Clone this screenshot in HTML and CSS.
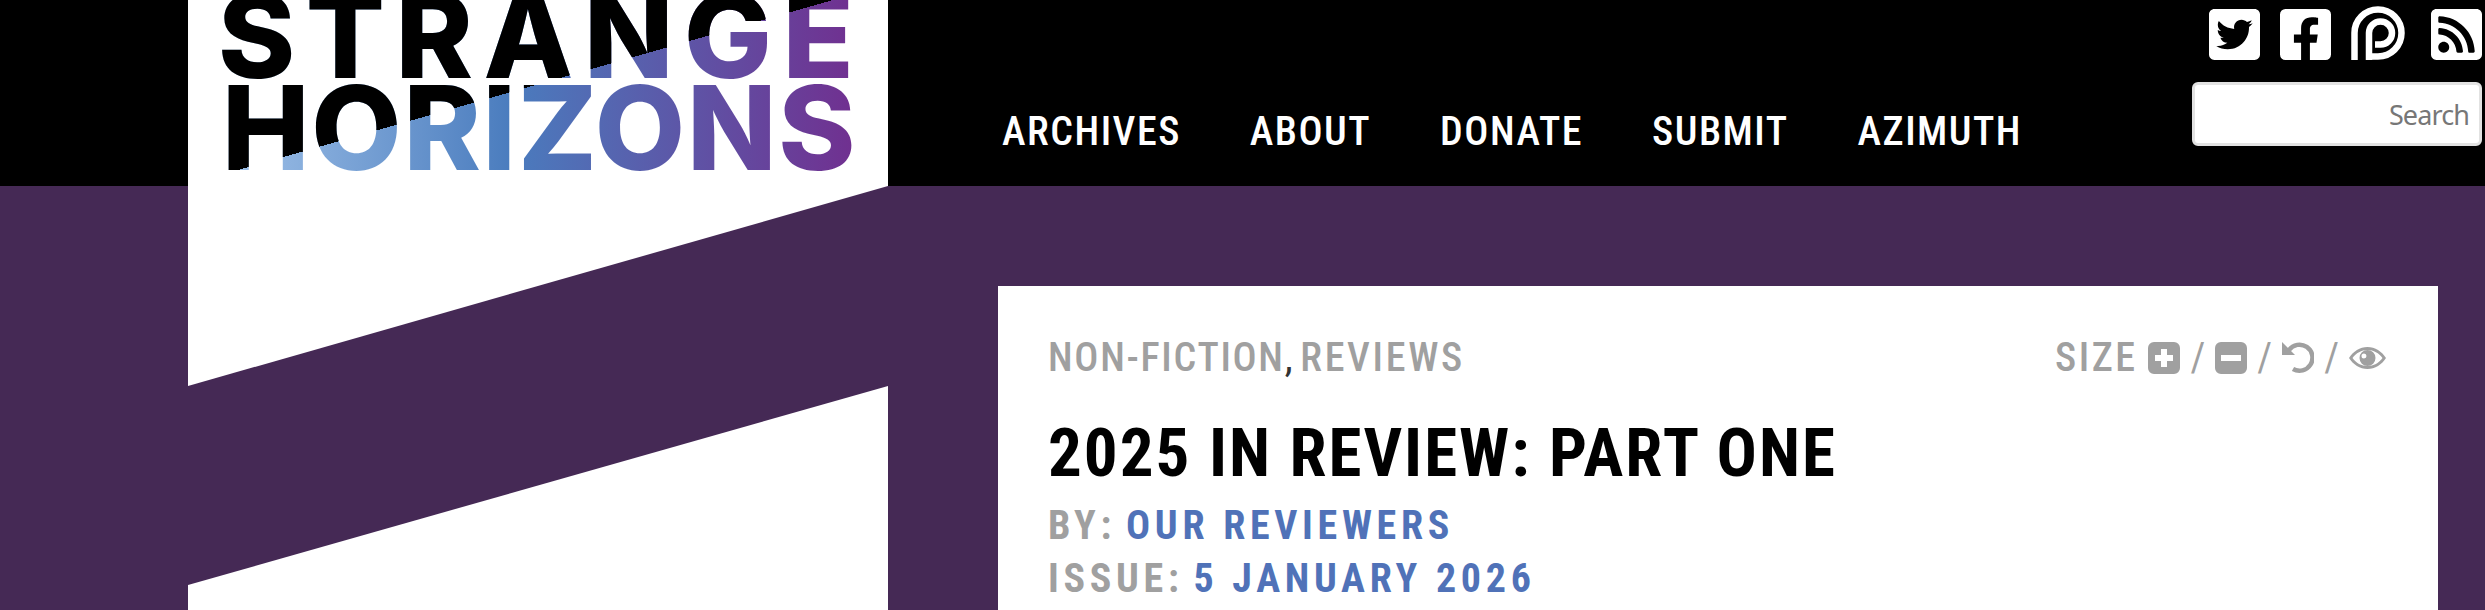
FILE: index.html
```html
<!DOCTYPE html>
<html lang="en">
<head>
<meta charset="utf-8">
<title>2025 in Review: Part One</title>
<link rel="stylesheet" href="styles.css">
</head>
<body>
<header class="site-header">
  <a class="brand" href="#">
    <span class="wordmark"><span class="line-one">STRANGE</span><span class="line-two">HORIZONS</span></span>
  </a>
  <nav class="main-nav">
    <a href="#">ARCHIVES</a>
    <a href="#">ABOUT</a>
    <a href="#">DONATE</a>
    <a href="#">SUBMIT</a>
    <a href="#">AZIMUTH</a>
  </nav>
  <div class="tools">
    <div class="social">
      <svg class="social-square" viewBox="0 32 448 448"><path d="M400 32H48C21.5 32 0 53.5 0 80v352c0 26.5 21.5 48 48 48h352c26.5 0 48-21.5 48-48V80c0-26.5-21.5-48-48-48zm-48.9 158.8c.2 2.8.2 5.7.2 8.5 0 86.7-66 186.6-186.6 186.6-37.2 0-71.7-10.8-100.7-29.4 5.3.6 10.4.8 15.8.8 30.7 0 58.9-10.4 81.4-28-28.8-.6-53-19.5-61.3-45.5 10.1 1.5 19.2 1.5 29.6-1.2-30-6.1-52.5-32.5-52.5-64.4v-.8c8.7 4.9 18.9 7.9 29.6 8.3a65.447 65.447 0 0 1-29.2-54.6c0-12.2 3.2-23.4 8.9-33.1 32.3 39.8 80.8 65.8 135.2 68.6-9.3-44.5 24-80.6 64-80.6 18.9 0 35.9 7.9 47.9 20.7 14.8-2.8 29-8.3 41.6-15.8-4.9 15.2-15.2 28-28.8 36.1 13.2-1.4 26-5.1 37.8-10.2-8.9 13.1-20.1 24.7-32.9 34z"/></svg>
      <svg class="social-square" viewBox="0 32 448 448"><path d="M400 32H48A48 48 0 0 0 0 80v352a48 48 0 0 0 48 48h137.25V327.69h-63V256h63v-54.64c0-62.15 37-96.48 93.67-96.48 27.14 0 55.52 4.84 55.52 4.84v61h-31.27c-30.81 0-40.42 19.12-40.42 38.73V256h68.78l-11 71.69h-57.78V480H400a48 48 0 0 0 48-48V80a48 48 0 0 0-48-48z"/></svg>
      <svg class="social-patreon" viewBox="0 0 54 54"><path d="M3.5 54V27A23.5 23.5 0 1 1 27 50.5H18M18 54V27A11.5 11.5 0 1 1 29.5 38.5H24"/></svg>
      <svg class="social-square" viewBox="0 32 448 448"><path d="M400 32H48C21.49 32 0 53.49 0 80v352c0 26.51 21.49 48 48 48h352c26.51 0 48-21.49 48-48V80c0-26.51-21.49-48-48-48zM112 416c-26.51 0-48-21.49-48-48s21.49-48 48-48 48 21.49 48 48-21.49 48-48 48zm157.533 0h-34.335c-6.011 0-11.051-4.636-11.442-10.634-5.214-80.05-69.243-143.92-149.123-149.123-5.997-.39-10.633-5.431-10.633-11.441v-34.335c0-6.535 5.468-11.777 11.994-11.425 110.546 5.974 198.997 94.536 204.964 204.964.352 6.526-4.89 11.994-11.425 11.994zm103.027 0h-34.334c-6.161 0-11.175-4.882-11.427-11.038-5.598-136.535-115.204-246.161-251.76-251.76C68.882 152.949 64 147.935 64 141.774V107.44c0-6.454 5.338-11.664 11.787-11.432 167.83 6.025 302.21 141.191 308.205 308.205.232 6.449-4.978 11.787-11.432 11.787z"/></svg>
    </div>
    <input class="search" type="text" placeholder="Search">
  </div>
</header>
<main class="page">
  <aside class="stripes">
    <svg class="stripes-art" viewBox="0 0 700 424"><polygon points="0,0 700,0 0,200"/><polygon points="700,200 700,424 0,424 0,399"/></svg>
  </aside>
  <article class="card">
    <div class="meta-row">
      <div class="tags"><a href="#">NON-FICTION</a><span class="comma">,</span><a href="#">REVIEWS</a></div>
      <div class="size-tools">
        <span class="size-label">SIZE</span>
        <svg class="size-icon" viewBox="0 0 32 32"><path fill-rule="evenodd" d="M6 0h20a6 6 0 0 1 6 6v20a6 6 0 0 1-6 6H6a6 6 0 0 1-6-6V6a6 6 0 0 1 6-6zM13 7v6H7v6h6v6h6v-6h6v-6h-6V7z"/></svg>
        <span class="slash">/</span>
        <svg class="size-icon" viewBox="0 0 32 32"><path fill-rule="evenodd" d="M6 0h20a6 6 0 0 1 6 6v20a6 6 0 0 1-6 6H6a6 6 0 0 1-6-6V6a6 6 0 0 1 6-6zM6 13v6h20v-6z"/></svg>
        <span class="slash">/</span>
        <svg class="size-icon" viewBox="0 0 32 32"><path d="M0 0L13 13H0z"/><path class="undo-arc" d="M7 8A13 13 0 1 1 11 27"/></svg>
        <span class="slash">/</span>
        <svg class="eye-icon" viewBox="0 0 37 22"><path fill-rule="evenodd" d="M18.5 0C26 0 33 4.500 37 11 33 17.500 26 22 18.500 22S4 17.500 0 11C4 4.500 11 0 18.500 0zM18.500 3C12.500 3 7 6 3.500 11 7 16 12.500 19 18.500 19S30 16 33.500 11C30 6 24.500 3 18.500 3z"/><path fill-rule="evenodd" d="M18.500 3a8 8 0 1 1 0 16 8 8 0 0 1 0-16zM15 6.500a2.500 2.500 0 1 0 0 5 2.500 2.500 0 0 0 0-5z"/></svg>
      </div>
    </div>
    <h1 class="title">2025 IN REVIEW: PART ONE</h1>
    <p class="byline"><span class="byline-label">BY:</span> <a href="#">OUR REVIEWERS</a></p>
    <p class="byline"><span class="byline-label">ISSUE:</span> <a href="#">5 JANUARY 2026</a></p>
  </article>
</main>
</body>
</html>
```
FILE: styles.css
```css
* { box-sizing: border-box; }
html, body { margin: 0; height: 100%; }
body {
  background: #452955;
  overflow: hidden;
  display: flex;
  flex-direction: column;
  font-family: "Roboto Condensed", "Liberation Sans Narrow", Roboto, sans-serif;
}
a { text-decoration: none; color: inherit; }

.site-header {
  height: 186px;
  flex: none;
  background: #000;
  display: flex;
  padding-left: 188px;
}
.brand {
  display: block;
  width: 700px;
  height: 186px;
  background: #fff;
  overflow: hidden;
}
.wordmark {
  display: block;
  width: 700px;
  margin-top: -10px;
  padding-left: 34px;
  font-family: Inter, sans-serif;
  font-weight: 800;
  font-size: 117px;
  line-height: 92px;
  color: transparent;
  background-image:
    linear-gradient(164.05deg, #000 186.800px, transparent 186.800px),
    linear-gradient(90deg, #9fc1e8 38px, #4a7cbe 323px, #703090 665px);
  -webkit-background-clip: text;
  background-clip: text;
}
.line-one { display: block; letter-spacing: 10.500px; margin-left: -4px; }
.line-two { display: block; letter-spacing: 1.700px; }

.main-nav {
  display: flex;
  gap: 69px;
  margin-left: 114px;
  padding-top: 109px;
  font-size: 40px;
  font-weight: 500;
  line-height: 46px;
  letter-spacing: 1.500px;
  color: #fff;
}
.tools {
  margin-left: auto;
  padding: 9px 3px 0 0;
  display: flex;
  flex-direction: column;
  align-items: flex-end;
  width: 293px;
}
.social {
  display: flex;
  align-items: flex-end;
  gap: 20px;
  height: 51px;
}
.social svg { display: block; fill: #fff; }
.social-square { width: 51px; height: 51px; }
.social-patreon {
  width: 54px;
  height: 54px;
  margin-right: 6px;
  fill: none !important;
  stroke: #fff;
  stroke-width: 6.500;
  overflow: visible;
}
.search {
  display: block;
  margin-top: 22px;
  width: 290px;
  height: 64px;
  border: 3px solid #e2e2e2;
  border-radius: 6px;
  background: #fff;
  text-align: right;
  padding: 0 10px;
  font-family: "Noto Sans", sans-serif;
  font-size: 27px;
  letter-spacing: -0.900px;
}
.search::placeholder { color: #777; opacity: 1; }

.page {
  flex: 1;
  display: flex;
  padding-left: 188px;
  padding-right: 47px;
  min-height: 0;
}
.stripes { width: 700px; flex: none; }
.stripes-art { display: block; width: 700px; height: 424px; fill: #fff; }

.card {
  flex: 1;
  margin: 100px 0 0 110px;
  background: #fff;
  padding: 54px 52px 0 50px;
}
.meta-row {
  display: flex;
  justify-content: space-between;
  align-items: center;
  height: 36px;
  font-size: 40px;
  line-height: 36px;
  color: #a0a0a0;
}
.tags { font-weight: 500; letter-spacing: 1.700px; }
.tags a:last-child { letter-spacing: 2.700px; }
.comma { color: #333; font-weight: 400; margin-right: 6px; }
.size-tools { display: flex; align-items: center; }
.size-label { font-weight: 500; letter-spacing: 2.500px; margin-right: 11px; }
.size-icon { width: 32px; height: 32px; fill: #a0a0a0; display: block; }
.slash { margin: 0 10px; }
.undo-arc { fill: none; stroke: #a0a0a0; stroke-width: 4.500; }
.eye-icon { width: 37px; height: 22px; fill: #a0a0a0; display: block; }

.title {
  margin: 42px 0 0;
  font-size: 67px;
  line-height: 70px;
  font-weight: 700;
  letter-spacing: 2px;
  color: #000;
}
.byline {
  margin: 0;
  font-size: 40px;
  line-height: 53px;
  font-weight: 700;
  letter-spacing: 4.700px;
  color: #a0a0a0;
}
.title + .byline { margin-top: 11px; }
.byline-label { margin-right: -4px; }
.byline a { color: #5072b8; }
```
